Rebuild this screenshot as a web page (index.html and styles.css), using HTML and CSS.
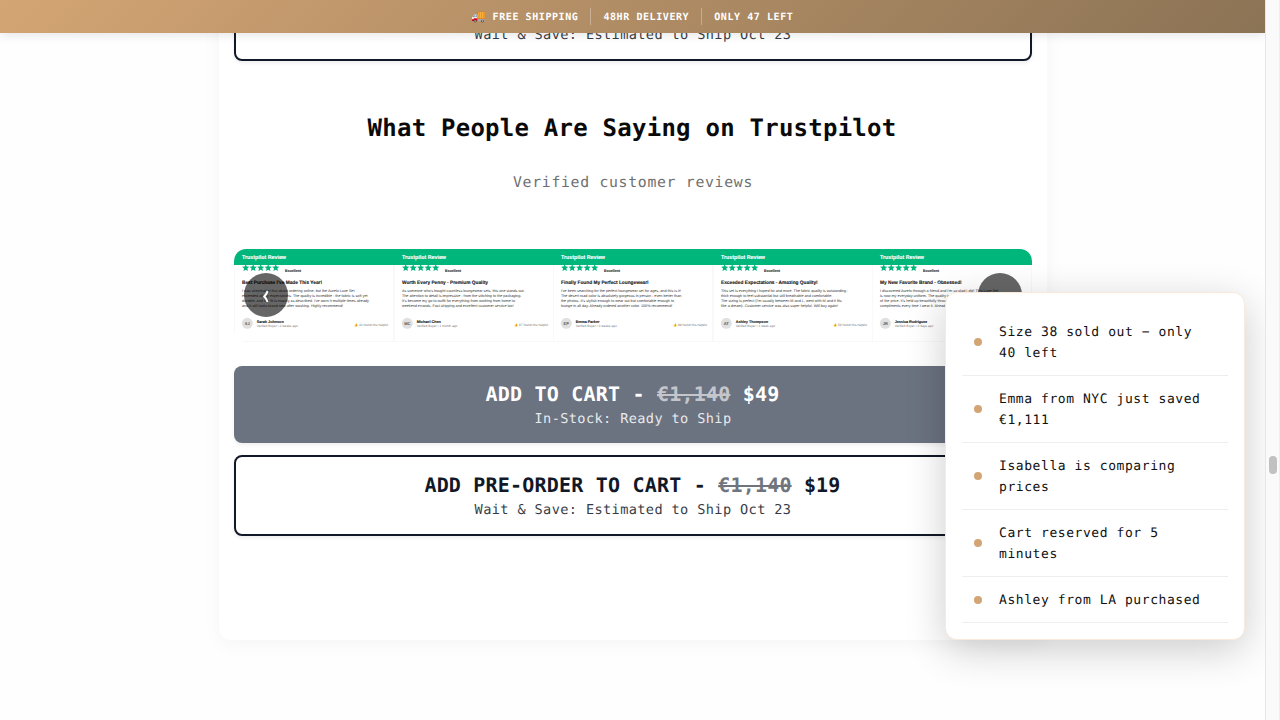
FILE: index.html
```html
<!DOCTYPE html>
<html lang="en">
<head>
<meta charset="utf-8">
<title>Trustpilot Reviews</title>
<link rel="stylesheet" href="styles.css">
</head>
<body>
<main class="page">
  <header class="topbar">
    <span class="topbar-item"><span class="truck">🚚</span><span class="label">FREE SHIPPING</span></span>
    <span class="topbar-item"><span class="label">48HR DELIVERY</span></span>
    <span class="topbar-item"><span class="label">ONLY 47 LEFT</span></span>
  </header>
  <section class="product">
    <button class="cta cta-outline"><span class="cta-title">ADD PRE-ORDER TO CART - <s>€1,140</s> $19</span><span class="cta-sub">Wait &amp; Save: Estimated to Ship Oct 23</span></button>
    <h2 class="heading">What People Are Saying on Trustpilot</h2>
    <p class="subheading">Verified customer reviews</p>
    <div class="carousel">
      <div class="track" id="track"></div>
      <button class="arrow arrow-prev" aria-label="Previous"><svg width="10" height="14" viewBox="0 0 10 14"><path d="M6.6 3.2Q5.5 6.4 3.3 8.5Q5.5 10.8 6.6 14" fill="none" stroke="#fff" stroke-width="2"/></svg></button>
      <button class="arrow arrow-next" aria-label="Next"><svg width="10" height="14" viewBox="0 0 10 14"><path d="M3.7 5Q4.5 7 6.5 8.5Q4.5 10.8 3.7 14" fill="none" stroke="#fff" stroke-width="1.7"/></svg></button>
    </div>
    <button class="cta cta-solid"><span class="cta-title">ADD TO CART - <s>€1,140</s> $49</span><span class="cta-sub">In-Stock: Ready to Ship</span></button>
    <button class="cta cta-outline"><span class="cta-title">ADD PRE-ORDER TO CART - <s>€1,140</s> $19</span><span class="cta-sub">Wait &amp; Save: Estimated to Ship Oct 23</span></button>
  </section>
  <ul class="activity">
    <li class="activity-item"><i class="dot"></i><span>Size 38 sold out − only 40 left</span></li>
    <li class="activity-item"><i class="dot"></i><span>Emma from NYC just saved €1,111</span></li>
    <li class="activity-item"><i class="dot"></i><span>Isabella is comparing prices</span></li>
    <li class="activity-item"><i class="dot"></i><span>Cart reserved for 5 minutes</span></li>
    <li class="activity-item"><i class="dot"></i><span>Ashley from LA purchased</span></li>
  </ul>
</main>
<div class="scrollbar"><div class="thumb"></div></div>
<script src="reviews.js"></script>
</body>
</html>
```
FILE: styles.css
```css
* { box-sizing: border-box; }
body { margin: 0; width: 1280px; height: 720px; overflow: hidden; display: flex; background: #fefefe; font-family: "DejaVu Sans Mono", monospace; color: #0a0a0a; text-rendering: geometricPrecision; }
.page { position: relative; width: 1265px; height: 720px; overflow: hidden; }
.topbar { position: absolute; z-index: 5; top: 0; left: 0; right: 0; height: 33px; display: flex; justify-content: center; align-items: center; background: linear-gradient(135deg, #d4a574 0%, #8b7355 100%); box-shadow: 0 2px 10px rgba(0,0,0,.1); color: #fff; font-size: 10px; font-weight: 700; letter-spacing: .58px; }
.topbar-item { display: flex; align-items: center; height: 17px; padding: 0 12px; white-space: pre; }
.topbar-item + .topbar-item { border-left: 1px solid rgba(255,255,255,.3); }
.label { padding-top: 2px; }
.truck { width: 21px; padding-bottom: 1px; font-size: 12px; font-weight: 400; }
.product { width: 828px; height: 660px; margin: -20px auto 0; padding: 0 15px; position: relative; left: .5px; background: #fff; border-radius: 0 0 12px 12px; box-shadow: 0 4px 20px rgba(0,0,0,.04); }
.cta { display: flex; flex-direction: column; align-items: center; width: 100%; padding: 14px 0; border: 0; border-radius: 8px; font-family: "DejaVu Sans Mono", monospace; box-shadow: 0 2px 4px rgba(0,0,0,.07); text-rendering: geometricPrecision; }
.cta-title { font-size: 20px; line-height: 28px; font-weight: 700; letter-spacing: .2px; margin-left: -1px; white-space: pre; }
.cta-title s { opacity: .6; }
.cta-sub { height: 20px; font-size: 13.6px; line-height: 23px; letter-spacing: .38px; opacity: .85; }
.cta-solid { height: 77px; background: #6b7280; color: #fff; }
.cta-outline { height: 81px; border: 2px solid #111827; background: #fff; color: #111827; }
.cta-solid + .cta-outline { margin-top: 12px; }
.heading { margin: 49px 2px 0 0; font: 700 24px/36px "DejaVu Sans Mono", monospace; letter-spacing: .24px; text-align: center; }
.subheading { height: 24px; margin: 24px 0 0; font-size: 14.8px; letter-spacing: .69px; line-height: 26px; text-align: center; color: #707070; }
.carousel { position: relative; height: 93px; margin: 55px 0 24px; }
.track { display: flex; height: 93px; overflow: hidden; border-radius: 12px; }
.review { display: block; flex: 1; min-width: 0; height: 93px; font-family: "Liberation Sans", Arial, sans-serif; }
.arrow { position: absolute; top: 24px; width: 44px; height: 44px; padding: 0; display: flex; align-items: center; justify-content: center; border: 0; border-radius: 50%; background: rgba(0,0,0,.6); }
.arrow-prev { left: 10px; }
.arrow-next { right: 10px; }
.activity { position: absolute; z-index: 4; right: 20px; bottom: 80px; width: 300px; height: 348px; margin: 0; padding: 16px; list-style: none; background: #fff; border: 1px solid #faeadb; border-radius: 12px; box-shadow: 0 10px 40px rgba(0,0,0,.2); }
.activity-item { display: flex; align-items: center; gap: 17px; height: 67px; padding: 12px; border-bottom: 1px solid #eee; font-size: 13px; letter-spacing: .57px; line-height: 21px; color: #111; }
.activity-item span { padding-top: 1px; margin-bottom: -1px; }
.activity-item:last-child { height: 46px; }
.dot { flex: none; width: 8px; height: 8px; border-radius: 50%; background: #d4a574; }
.scrollbar { width: 15px; height: 720px; padding: 456px 3px 0; background: #fafafa; border-left: 1px solid #e6e6e6; border-right: 1px solid #eee; }
.thumb { width: 8px; height: 18px; border-radius: 4px; background: #c1c1c1; }
```
FILE: reviews.js
```js
// Each text entry is [content, rendered width].
const reviews = [
  { title: ["Best Purchase I've Made This Year!", 80], body: [["I was skeptical at first about ordering online, but the Aurelo Luxe Set", 112.5], ["exceeded all my expectations. The quality is incredible - the fabric is soft yet", 125.5], ["durable, and the fit is exactly as described. I've worn it multiple times already", 127], ["and it still looks brand new after washing. Highly recommend!", 101]], initials: "SJ", name: ["Sarah Johnson", 27], meta: ["Verified Buyer • 2 weeks ago", 41], helpful: "42 found this helpful" },
  { title: ["Worth Every Penny - Premium Quality", 86], body: [["As someone who's bought countless loungewear sets, this one stands out.", 122.7], ["The attention to detail is impressive - from the stitching to the packaging.", 119.3], ["It's become my go to outfit for everything from working from home to", 113], ["weekend errands. Fast shipping and excellent customer service too!", 111.7]], initials: "MC", name: ["Michael Chen", 24.2], meta: ["Verified Buyer • 1 month ago", 40.7], helpful: "67 found this helpful" },
  { title: ["Finally Found My Perfect Loungewear!", 87.7], body: [["I've been searching for the perfect loungewear set for ages, and this is it!", 120], ["The desert road color is absolutely gorgeous in person - even better than", 120.3], ["the photos. It's stylish enough to wear out but comfortable enough to", 113], ["lounge in all day. Already ordered another color. 100% recommend!", 111.3]], initials: "EP", name: ["Emma Parker", 23.7], meta: ["Verified Buyer • 3 weeks ago", 41], helpful: "89 found this helpful" },
  { title: ["Exceeded Expectations - Amazing Quality!", 96.7], body: [["This set is everything I hoped for and more. The fabric quality is outstanding -", 127.3], ["thick enough to feel substantial but still breathable and comfortable.", 111.3], ["The sizing is perfect (I'm usually between M and L, went with M and it fits", 120.7], ["like a dream). Customer service was also super helpful. Will buy again!", 117]], initials: "AT", name: ["Ashley Thompson", 32.3], meta: ["Verified Buyer • 1 week ago", 39.3], helpful: "58 found this helpful" },
  { title: ["My New Favorite Brand - Obsessed!", 81.7], body: [["I discovered Aurelo through a friend and I'm so glad I did! This Luxe Set", 118.3], ["is now my everyday uniform. The quality is incredible for", 92], ["of the price. It's held up beautifully through every wash", 90], ["compliments every time I wear it. Already ordered more", 90]], initials: "JR", name: ["Jessica Rodriguez", 32.5], meta: ["Verified Buyer • 4 days ago", 38.5] }
];

function line(x, y, size, fill, weight, [content, width]) {
  const outline = weight === 700 ? ` stroke="${fill}" stroke-width=".12"` : "";
  return `<text x="${x}" y="${y}" font-size="${size}" fill="${fill}" font-weight="${weight}"${outline} textLength="${width}" lengthAdjust="spacingAndGlyphs">${content}</text>`;
}

function star(cx, cy, r) {
  const points = [];
  for (let i = 0; i < 10; i++) {
    const radius = i % 2 ? r * 0.46 : r;
    const angle = Math.PI * (i / 5 - 0.5);
    points.push((cx + radius * Math.cos(angle)).toFixed(2) + "," + (cy + radius * Math.sin(angle)).toFixed(2));
  }
  return `<polygon points="${points.join(" ")}" fill="#00b67a"/>`;
}

document.getElementById("track").innerHTML = reviews.map(r => `
<svg class="review" viewBox="0 0 159.6 93" preserveAspectRatio="none">
  <rect x=".2" y=".2" width="159.2" height="92.4" fill="#fff" stroke="#f5f5f5" stroke-width=".7"/>
  <rect x="-1" width="162" height="16" fill="#00b67a"/>
  ${line(8, 10, 5.6, "#fff", 700, ["Trustpilot Review", 44])}
  ${[0, 1, 2, 3, 4].map(i => star(11.7 + i * 7.5, 19, 3.8)).join("")}
  ${line(51, 23, 3.8, "#333", 700, ["Excellent", 16])}
  ${line(8, 35.2, 4.9, "#1a1a1a", 700, r.title)}
  ${r.body.map((b, i) => line(8, 43.2 + i * 5, 3.7, "#333", 400, b)).join("")}
  <circle cx="13.3" cy="74.3" r="5.5" fill="#e0e0e0"/>
  <text x="13.3" y="75.7" font-size="4" font-weight="700" fill="#555" text-anchor="middle">${r.initials}</text>
  ${line(22.7, 73.8, 3.8, "#222", 700, r.name)}
  ${line(22.7, 77.8, 3.2, "#777", 400, r.meta)}
  ${r.helpful ? `<text x="120" y="77.3" font-size="3.3">👍</text>` + line(125, 77, 3.2, "#777", 400, [r.helpful, 29]) : ""}
</svg>`).join("");
```
